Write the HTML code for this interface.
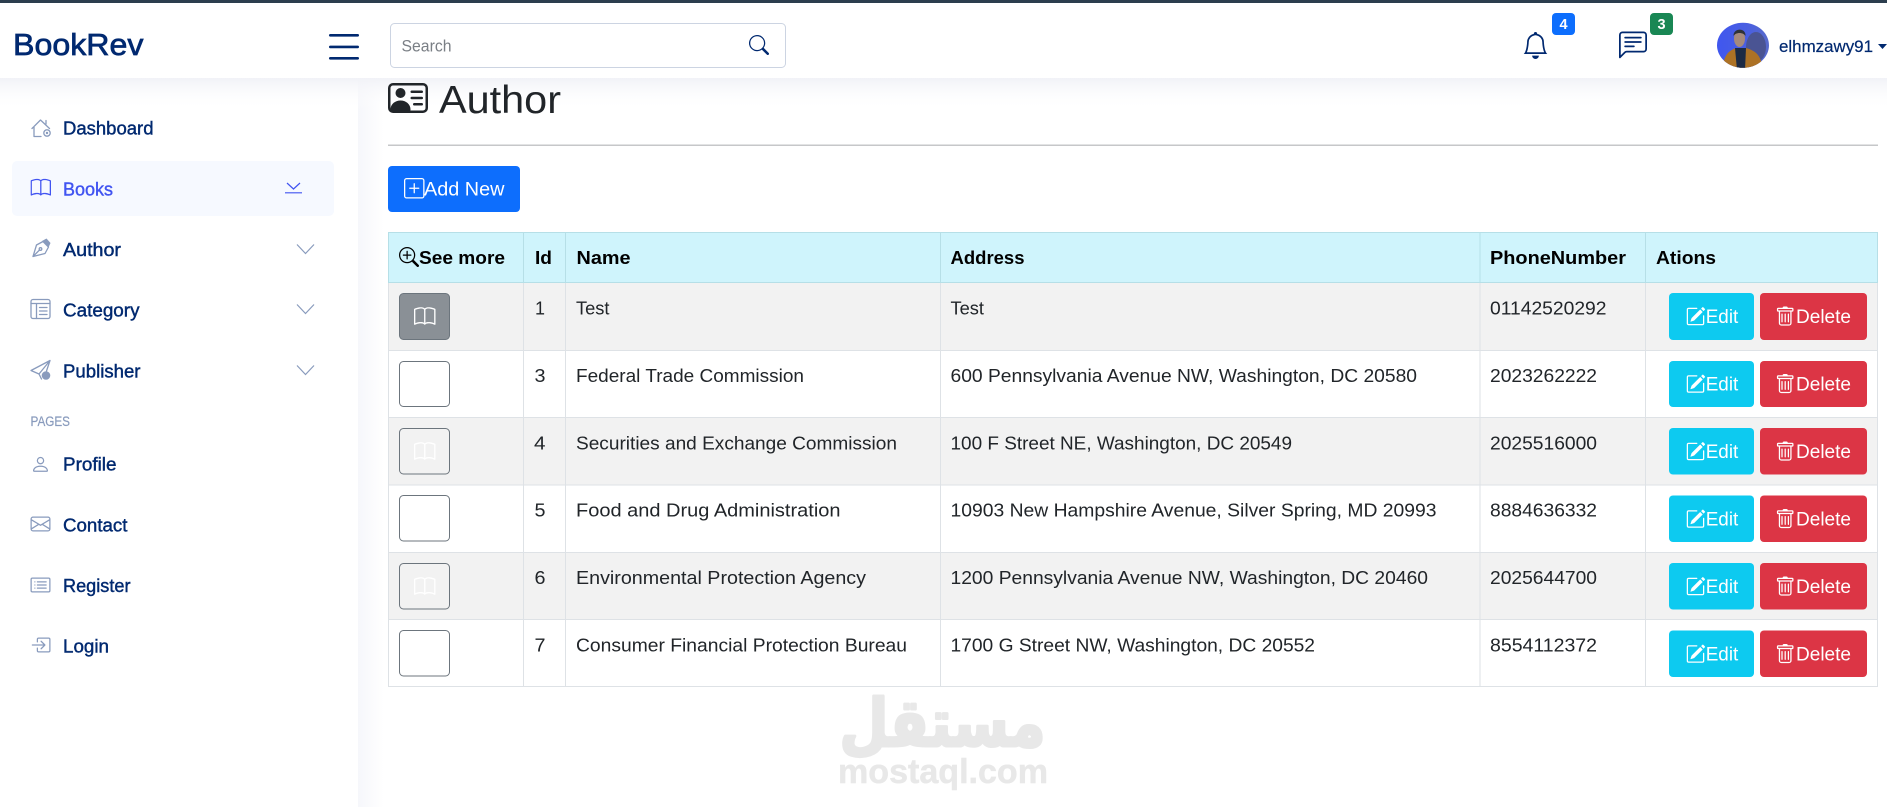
<!DOCTYPE html>
<html lang="en"><head><meta charset="utf-8"><title>BookRev - Author</title>
<style>
html,body{margin:0;padding:0;background:#fff;width:1887px;height:807px;overflow:hidden}
svg.page{display:block;position:absolute;left:0;top:0}
text{font-family:"Liberation Sans","DejaVu Sans",sans-serif}
.n{font-size:18px;fill:#012970;stroke:#012970;stroke-width:.4}
.th{font-size:18.5px;font-weight:700;fill:#000}
.td{font-size:18.5px;fill:#212529}
.b{font-size:19px;fill:#fff}
.ic{fill:#899bbd}
.st{fill:none;stroke:#899bbd;stroke-width:1.3;stroke-linejoin:round;stroke-linecap:round}
.bd{font-size:14.5px;font-weight:700;fill:#fff;text-anchor:middle}
</style></head><body>
<svg class="page" xmlns="http://www.w3.org/2000/svg" width="1887" height="807" viewBox="0 0 1887 807">
<defs>
<linearGradient id="sh" x1="0" y1="0" x2="0" y2="1"><stop offset="0" stop-color="#f1f2f7"/><stop offset="1" stop-color="#fff" stop-opacity="0"/></linearGradient>
<linearGradient id="sv" x1="0" y1="0" x2="1" y2="0"><stop offset="0" stop-color="#f6f7fb"/><stop offset="1" stop-color="#fff"/></linearGradient>
<linearGradient id="av" x1="0" y1="0" x2="1" y2="0"><stop offset="0" stop-color="#3f56f0"/><stop offset=".6" stop-color="#4a5fe0"/><stop offset="1" stop-color="#5a6cc8"/></linearGradient>
<clipPath id="avc"><ellipse cx="1743" cy="45.3" rx="26" ry="22.5"/></clipPath>
<symbol id="book" viewBox="0 0 16 16"><path d="M1 2.828c.885-.37 2.154-.769 3.388-.893 1.33-.134 2.458.063 3.112.752v9.746c-.935-.53-2.12-.603-3.213-.493-1.18.12-2.37.461-3.287.811V2.828zm7.5-.141c.654-.689 1.782-.886 3.112-.752 1.234.124 2.503.523 3.388.893v9.923c-.918-.35-2.107-.692-3.287-.81-1.094-.111-2.278-.039-3.213.492V2.687zM8 1.783C7.015.936 5.587.81 4.287.94c-1.514.153-3.042.672-3.994 1.105A.5.5 0 0 0 0 2.5v11a.5.5 0 0 0 .707.455c.882-.4 2.303-.881 3.68-1.02 1.409-.142 2.59.087 3.223.877a.5.5 0 0 0 .78 0c.633-.79 1.814-1.019 3.222-.877 1.378.139 2.8.62 3.681 1.02A.5.5 0 0 0 16 13.5v-11a.5.5 0 0 0-.293-.455c-.952-.433-2.48-.952-3.994-1.105C10.413.809 8.985.936 8 1.783z"/></symbol>
<symbol id="edit" viewBox="0 0 16 16"><path d="M15.502 1.94a.5.5 0 0 1 0 .706L14.459 3.69l-2-2L13.502.646a.5.5 0 0 1 .707 0l1.293 1.293zm-1.75 2.456-2-2L4.939 9.21a.5.5 0 0 0-.121.196l-.805 2.414a.25.25 0 0 0 .316.316l2.414-.805a.5.5 0 0 0 .196-.12l6.813-6.814z"/><path d="M1 13.5A1.5 1.5 0 0 0 2.5 15h11a1.5 1.5 0 0 0 1.5-1.5v-6a.5.5 0 0 0-1 0v6a.5.5 0 0 1-.5.5h-11a.5.5 0 0 1-.5-.5v-11a.5.5 0 0 1 .5-.5H9a.5.5 0 0 0 0-1H2.5A1.5 1.5 0 0 0 1 2.5v11z"/></symbol>
<symbol id="trash" viewBox="0 0 16 16"><path d="M5.5 5.5A.5.5 0 0 1 6 6v6a.5.5 0 0 1-1 0V6a.5.5 0 0 1 .5-.5zm2.5 0a.5.5 0 0 1 .5.5v6a.5.5 0 0 1-1 0V6a.5.5 0 0 1 .5-.5zm3 .5a.5.5 0 0 0-1 0v6a.5.5 0 0 0 1 0V6z"/><path fill-rule="evenodd" d="M14.5 3a1 1 0 0 1-1 1H13v9a2 2 0 0 1-2 2H5a2 2 0 0 1-2-2V4h-.5a1 1 0 0 1-1-1V2a1 1 0 0 1 1-1H6a1 1 0 0 1 1-1h2a1 1 0 0 1 1 1h3.5a1 1 0 0 1 1 1v1zM4.118 4 4 4.059V13a1 1 0 0 0 1 1h6a1 1 0 0 0 1-1V4.059L11.882 4H4.118zM2.5 3V2h11v1h-11z"/></symbol>
</defs>

<!-- main background, shadows -->
<rect width="1887" height="807" fill="#fff"/>
<rect x="358" y="78" width="26" height="729" fill="url(#sv)"/>
<rect x="0" y="78" width="358" height="729" fill="#fff"/>
<rect x="0" y="78" width="1887" height="32" fill="url(#sh)"/>

<!-- header -->
<rect x="0" y="0" width="1887" height="78" fill="#fff"/>
<rect x="0" y="0" width="1887" height="3" fill="#2c3e4e"/>
<text x="13" y="55" font-size="31" fill="#012970" stroke="#012970" stroke-width=".7" textLength="130.5" lengthAdjust="spacingAndGlyphs">BookRev</text>
<g fill="#012970"><rect x="329" y="34" width="30" height="2.6" rx="1.3"/><rect x="329" y="45.6" width="30" height="2.6" rx="1.3"/><rect x="329" y="57" width="30" height="2.6" rx="1.3"/></g>
<rect x="390.5" y="23.5" width="395" height="44" rx="4" fill="#fff" stroke="#ccd4e2"/>
<text x="401.5" y="51.5" font-size="17" fill="#7a7f85" textLength="50" lengthAdjust="spacingAndGlyphs">Search</text>
<svg x="749" y="35" width="20" height="20" viewBox="0 0 16 16" fill="#012970"><path d="M11.742 10.344a6.5 6.5 0 1 0-1.397 1.398h-.001c.03.04.062.078.098.115l3.85 3.85a1 1 0 0 0 1.415-1.414l-3.85-3.85a1.007 1.007 0 0 0-.115-.1zM12 6.5a5.5 5.5 0 1 1-11 0 5.5 5.5 0 0 1 11 0z"/></svg>

<svg x="1522" y="32" width="27" height="27" viewBox="0 0 16 16" fill="#012970"><path d="M8 16a2 2 0 0 0 2-2H6a2 2 0 0 0 2 2zM8 1.918l-.797.161A4.002 4.002 0 0 0 4 6c0 .628-.134 2.197-.459 3.742-.16.767-.376 1.566-.663 2.258h10.244c-.287-.692-.502-1.49-.663-2.258C12.134 8.197 12 6.628 12 6a4.002 4.002 0 0 0-3.203-3.92L8 1.917zM14.22 12c.223.447.481.801.78 1H1c.299-.199.557-.553.78-1C2.68 10.2 3 6.88 3 6c0-2.42 1.72-4.44 4.005-4.901a1 1 0 1 1 1.99 0A5.002 5.002 0 0 1 13 6c0 .88.32 4.2 1.22 6z"/></svg>
<rect x="1552" y="13" width="23" height="22" rx="4" fill="#0d6efd"/><text class="bd" x="1563.5" y="29">4</text>
<svg x="1619" y="31.5" width="28" height="28" viewBox="0 0 16 16" fill="#012970"><path d="M14 1a1 1 0 0 1 1 1v8a1 1 0 0 1-1 1H4.414A2 2 0 0 0 3 11.586l-2 2V2a1 1 0 0 1 1-1h12zM2 0a2 2 0 0 0-2 2v12.793a.5.5 0 0 0 .854.353l2.853-2.853A1 1 0 0 1 4.414 12H14a2 2 0 0 0 2-2V2a2 2 0 0 0-2-2H2z"/><path d="M3 3.5a.5.5 0 0 1 .5-.5h9a.5.5 0 0 1 0 1h-9a.5.5 0 0 1-.5-.5zM3 6a.5.5 0 0 1 .5-.5h9a.5.5 0 0 1 0 1h-9A.5.5 0 0 1 3 6zm0 2.5a.5.5 0 0 1 .5-.5h5a.5.5 0 0 1 0 1h-5a.5.5 0 0 1-.5-.5z"/></svg>
<rect x="1650" y="13" width="23" height="22" rx="4" fill="#198754"/><text class="bd" x="1661.5" y="29">3</text>

<!-- avatar -->
<g clip-path="url(#avc)">
<rect x="1715" y="20" width="56" height="50" fill="url(#av)"/>
<ellipse cx="1756" cy="47" rx="10" ry="15" fill="#4a5493"/>
<path d="M1722 70 C1724 55 1728 51 1736 48 L1746 48 C1756 51 1761 55 1763 70 Z" fill="#ad7225"/>
<path d="M1735 48 L1746 48 L1745 70 L1737 70 Z" fill="#1c2a44"/>
<ellipse cx="1739.5" cy="38.5" rx="5.5" ry="8.5" fill="#a68a7c"/>
<path d="M1733.5 36 C1733 28 1746 27 1745.5 36 C1743 32 1736 32 1733.5 36Z" fill="#2e3238"/>
</g>
<text x="1779" y="52" font-size="17" fill="#012970" stroke="#012970" stroke-width=".2" textLength="94" lengthAdjust="spacingAndGlyphs">elhmzawy91</text>
<path d="M1878 44 L1887 44 L1882.5 49 Z" fill="#012970"/>

<!-- sidebar -->
<rect x="12" y="161" width="322" height="55" rx="5" fill="#f6f9ff"/>
<text class="n" x="63" y="134.5" textLength="90.5" lengthAdjust="spacingAndGlyphs">Dashboard</text>
<text class="n" x="63" y="195.5" style="fill:#4154f1;stroke:#4154f1" textLength="50" lengthAdjust="spacingAndGlyphs">Books</text>
<text class="n" x="63" y="256" textLength="58" lengthAdjust="spacingAndGlyphs">Author</text>
<text class="n" x="63" y="316.5" textLength="76.5" lengthAdjust="spacingAndGlyphs">Category</text>
<text class="n" x="63" y="377.5" textLength="77.5" lengthAdjust="spacingAndGlyphs">Publisher</text>
<text x="30.5" y="426" font-size="13.5" fill="#899bbd" stroke="#899bbd" stroke-width=".2" textLength="39.5" lengthAdjust="spacingAndGlyphs">PAGES</text>
<text class="n" x="63" y="470.5" textLength="53.5" lengthAdjust="spacingAndGlyphs">Profile</text>
<text class="n" x="63" y="531.5" textLength="64.5" lengthAdjust="spacingAndGlyphs">Contact</text>
<text class="n" x="63" y="592" textLength="67.5" lengthAdjust="spacingAndGlyphs">Register</text>
<text class="n" x="63" y="652.5" textLength="46" lengthAdjust="spacingAndGlyphs">Login</text>

<!-- sidebar icons -->
<g class="st"><path d="M32 128.5 L40.5 120 L49.5 128.5 M34 126.5 V136.5 H41 M46 120.5 V124"/><circle cx="47" cy="133" r="3.2"/></g><circle cx="47" cy="133" r="1.2" class="ic"/>
<use href="#book" x="30.6" y="177.7" width="20.4" height="20.4" fill="#4154f1"/>
<g class="st"><path d="M33 256.5 L36.5 245 L43 241.5 L48.5 247 L45 253.5 Z M33 256.5 L39.5 250"/><circle cx="40.5" cy="249" r="1.3"/></g><path d="M42 241 L46.5 238.5 L50.5 243 L48.5 247.5 Z" class="ic"/>
<g class="st"><rect x="31" y="299.5" width="19" height="19" rx="2"/><path d="M31 303.5 H50 M36.5 303.5 V318.5 M39.5 307.5 H47 M39.5 311 H47 M39.5 314.5 H47"/></g>
<g class="st"><path d="M50 360.5 L31 370.5 L39 374 L41.5 379 M50 360.5 L39 374 M50 360.5 L46.5 371"/></g><circle cx="46" cy="375.5" r="4.3" class="ic"/>
<svg x="30.5" y="456" width="20" height="20" viewBox="0 0 16 16" class="ic" overflow="visible"><path d="M8 8a3 3 0 1 0 0-6 3 3 0 0 0 0 6zm2-3a2 2 0 1 1-4 0 2 2 0 0 1 4 0zm4 8c0 1-1 1-1 1H3s-1 0-1-1 1-4 6-4 6 3 6 4zm-1-.004c-.001-.246-.154-.986-.832-1.664C11.516 10.68 10.289 10 8 10c-2.29 0-3.516.68-4.168 1.332-.678.678-.83 1.418-.832 1.664h10z" transform="translate(0,-1.3)"/></svg>
<svg x="30.5" y="514" width="20" height="20" viewBox="0 0 16 16" class="ic"><path d="M0 4a2 2 0 0 1 2-2h12a2 2 0 0 1 2 2v8a2 2 0 0 1-2 2H2a2 2 0 0 1-2-2V4Zm2-1a1 1 0 0 0-1 1v.217l7 4.2 7-4.2V4a1 1 0 0 0-1-1H2Zm13 2.383-4.708 2.825L15 11.105V5.383Zm-.034 6.876-5.64-3.471L8 9.583l-1.326-.795-5.64 3.47A1 1 0 0 0 2 13h12a1 1 0 0 0 .966-.741ZM1 11.105l4.708-2.897L1 5.383v5.722Z"/></svg>
<svg x="30.5" y="575" width="20" height="20" viewBox="0 0 16 16" class="ic"><path d="M14.5 3a.5.5 0 0 1 .5.5v9a.5.5 0 0 1-.5.5h-13a.5.5 0 0 1-.5-.5v-9a.5.5 0 0 1 .5-.5h13zm-13-1A1.5 1.5 0 0 0 0 3.5v9A1.5 1.5 0 0 0 1.5 14h13a1.5 1.5 0 0 0 1.5-1.5v-9A1.5 1.5 0 0 0 14.5 2h-13z"/><path d="M5 8a.5.5 0 0 1 .5-.5h7a.5.5 0 0 1 0 1h-7A.5.5 0 0 1 5 8zm0-2.5a.5.5 0 0 1 .5-.5h7a.5.5 0 0 1 0 1h-7a.5.5 0 0 1-.5-.5zm0 5a.5.5 0 0 1 .5-.5h7a.5.5 0 0 1 0 1h-7a.5.5 0 0 1-.5-.5zm-1-5a.5.5 0 1 1-1 0 .5.5 0 0 1 1 0zM4 8a.5.5 0 1 1-1 0 .5.5 0 0 1 1 0zm0 2.5a.5.5 0 1 1-1 0 .5.5 0 0 1 1 0z"/></svg>
<svg x="30.5" y="635" width="20" height="20" viewBox="0 0 16 16" class="ic"><path d="M6 3.5a.5.5 0 0 1 .5-.5h8a.5.5 0 0 1 .5.5v9a.5.5 0 0 1-.5.5h-8a.5.5 0 0 1-.5-.5v-2a.5.5 0 0 0-1 0v2A1.5 1.5 0 0 0 6.5 14h8a1.5 1.5 0 0 0 1.5-1.5v-9A1.5 1.5 0 0 0 14.5 2h-8A1.5 1.5 0 0 0 5 3.5v2a.5.5 0 0 0 1 0v-2z"/><path d="M11.854 8.354a.5.5 0 0 0 0-.708l-3-3a.5.5 0 1 0-.708.708L10.293 7.5H1.5a.5.5 0 0 0 0 1h8.793l-2.147 2.146a.5.5 0 0 0 .708.708l3-3z"/></svg>

<!-- chevrons -->
<g fill="none" stroke="#899bbd" stroke-width="1.2"><path d="M297 244.5 L305.5 253.5 L314 244.5"/><path d="M297 304.5 L305.5 313.5 L314 304.5"/><path d="M297 365.5 L305.5 374.5 L314 365.5"/></g>
<path d="M287 183 L293.5 189 L300 183 M285 192.8 H302" fill="none" stroke="#4154f1" stroke-width="1.2"/>

<!-- title -->
<svg x="388" y="78" width="40" height="40" viewBox="0 0 16 16" fill="#212529"><path d="M5 8a2 2 0 1 0 0-4 2 2 0 0 0 0 4Zm4-2.5a.5.5 0 0 1 .5-.5h4a.5.5 0 0 1 0 1h-4a.5.5 0 0 1-.5-.5ZM9 8a.5.5 0 0 1 .5-.5h4a.5.5 0 0 1 0 1h-4A.5.5 0 0 1 9 8Zm1 2.5a.5.5 0 0 1 .5-.5h3a.5.5 0 0 1 0 1h-3a.5.5 0 0 1-.5-.5Z"/><path d="M2 2a2 2 0 0 0-2 2v8a2 2 0 0 0 2 2h12a2 2 0 0 0 2-2V4a2 2 0 0 0-2-2H2ZM1 4a1 1 0 0 1 1-1h12a1 1 0 0 1 1 1v8a1 1 0 0 1-1 1H8.96c.026-.163.04-.33.04-.5C9 10.567 7.21 9 5 9c-2.086 0-3.8 1.398-3.984 3.181A1.006 1.006 0 0 1 1 12V4Z"/></svg>
<text x="439" y="113" font-size="39" fill="#212529" textLength="122" lengthAdjust="spacingAndGlyphs">Author</text>
<rect x="388" y="144.5" width="1490" height="1.5" fill="#c6c7c9"/>

<!-- add new -->
<rect x="388" y="166" width="132" height="46" rx="4" fill="#0d6efd"/>
<svg x="404" y="178" width="20.5" height="20.5" viewBox="0 0 16 16" fill="#fff"><path d="M14 1a1 1 0 0 1 1 1v12a1 1 0 0 1-1 1H2a1 1 0 0 1-1-1V2a1 1 0 0 1 1-1h12zM2 0a2 2 0 0 0-2 2v12a2 2 0 0 0 2 2h12a2 2 0 0 0 2-2V2a2 2 0 0 0-2-2H2z"/><path d="M8 4a.5.5 0 0 1 .5.5v3h3a.5.5 0 0 1 0 1h-3v3a.5.5 0 0 1-1 0v-3h-3a.5.5 0 0 1 0-1h3v-3A.5.5 0 0 1 8 4z"/></svg>
<text class="b" x="424" y="195.5" textLength="80.5" lengthAdjust="spacingAndGlyphs">Add New</text>

<!-- table backgrounds -->
<rect x="388" y="232" width="1490" height="50.5" fill="#cff4fc"/>
<rect x="388" y="283" width="1490" height="67" fill="#f2f2f2"/>
<rect x="388" y="418" width="1490" height="67" fill="#f2f2f2"/>
<rect x="388" y="553" width="1490" height="67" fill="#f2f2f2"/>
<g fill="#dee2e6">
<rect x="388" y="350" width="1490" height="1"/><rect x="388" y="417" width="1490" height="1"/><rect x="388" y="484.5" width="1490" height="1"/><rect x="388" y="552" width="1490" height="1"/><rect x="388" y="619" width="1490" height="1"/><rect x="388" y="686" width="1490" height="1"/>
<rect x="388" y="282" width="1" height="405"/><rect x="523" y="282" width="1" height="405"/><rect x="565" y="282" width="1" height="405"/><rect x="940" y="282" width="1" height="405"/><rect x="1479.5" y="282" width="1" height="405"/><rect x="1645" y="282" width="1" height="405"/><rect x="1877" y="282" width="1" height="405"/>
</g>
<g fill="#b6dfe7">
<rect x="388" y="232" width="1490" height="1"/><rect x="388" y="282" width="1490" height="1"/>
<rect x="388" y="232" width="1" height="51"/><rect x="523" y="232" width="1" height="51"/><rect x="565" y="232" width="1" height="51"/><rect x="940" y="232" width="1" height="51"/><rect x="1479.5" y="232" width="1" height="51"/><rect x="1645" y="232" width="1" height="51"/><rect x="1877" y="232" width="1" height="51"/>
</g>

<!-- table head -->
<svg x="399" y="247" width="20" height="20" viewBox="0 0 16 16" fill="#000"><path d="M6.5 12a5.5 5.5 0 1 0 0-11 5.5 5.5 0 0 0 0 11zM13 6.5a6.5 6.5 0 1 1-13 0 6.5 6.5 0 0 1 13 0z"/><path d="M10.344 11.742c.03.04.062.078.098.115l3.85 3.85a1 1 0 0 0 1.415-1.414l-3.85-3.85a1.007 1.007 0 0 0-.115-.1 6.538 6.538 0 0 1-1.398 1.4z"/><path d="M6.5 3a.5.5 0 0 1 .5.5V6h2.5a.5.5 0 0 1 0 1H7v2.5a.5.5 0 0 1-1 0V7H3.5a.5.5 0 0 1 0-1H6V3.5a.5.5 0 0 1 .5-.5z"/></svg>
<text class="th" x="419" y="264" textLength="86" lengthAdjust="spacingAndGlyphs">See more</text>
<text class="th" x="535" y="264" textLength="17" lengthAdjust="spacingAndGlyphs">Id</text>
<text class="th" x="576.5" y="264" textLength="54" lengthAdjust="spacingAndGlyphs">Name</text>
<text class="th" x="950.5" y="264" textLength="74" lengthAdjust="spacingAndGlyphs">Address</text>
<text class="th" x="1490" y="264" textLength="136" lengthAdjust="spacingAndGlyphs">PhoneNumber</text>
<text class="th" x="1656" y="264" textLength="60" lengthAdjust="spacingAndGlyphs">Ations</text>

<!-- row 1 -->
<rect x="399.5" y="293.5" width="50" height="46" rx="4" fill="#8a9096" stroke="#6c757d"/>
<use href="#book" x="414" y="306" width="21.5" height="21.5" fill="#fff"/>
<text class="td" x="535" y="314.5" textLength="10" lengthAdjust="spacingAndGlyphs">1</text>
<text class="td" x="576" y="314.5" textLength="33.5" lengthAdjust="spacingAndGlyphs">Test</text>
<text class="td" x="950.5" y="314.5" textLength="33.5" lengthAdjust="spacingAndGlyphs">Test</text>
<text class="td" x="1490" y="314.5" textLength="116.5" lengthAdjust="spacingAndGlyphs">01142520292</text>
<!-- row 2 -->
<rect x="399.5" y="361.5" width="50" height="45" rx="4" fill="#fff" stroke="#6c757d"/>
<text class="td" x="534.5" y="382" textLength="11" lengthAdjust="spacingAndGlyphs">3</text>
<text class="td" x="576" y="382" textLength="228" lengthAdjust="spacingAndGlyphs">Federal Trade Commission</text>
<text class="td" x="950.5" y="382" textLength="466.5" lengthAdjust="spacingAndGlyphs">600 Pennsylvania Avenue NW, Washington, DC 20580</text>
<text class="td" x="1490" y="382" textLength="107" lengthAdjust="spacingAndGlyphs">2023262222</text>
<!-- row 3 -->
<rect x="399.5" y="428.5" width="50" height="45.5" rx="4" fill="#f2f2f2" stroke="#6c757d"/>
<use href="#book" x="414" y="441" width="21.5" height="21.5" fill="#fff"/>
<text class="td" x="534" y="449.5" textLength="11.5" lengthAdjust="spacingAndGlyphs">4</text>
<text class="td" x="576" y="449.5" textLength="321" lengthAdjust="spacingAndGlyphs">Securities and Exchange Commission</text>
<text class="td" x="950.5" y="449.5" textLength="341.5" lengthAdjust="spacingAndGlyphs">100 F Street NE, Washington, DC 20549</text>
<text class="td" x="1490" y="449.5" textLength="107" lengthAdjust="spacingAndGlyphs">2025516000</text>
<!-- row 4 -->
<rect x="399.5" y="495.5" width="50" height="45.5" rx="4" fill="#fff" stroke="#6c757d"/>
<text class="td" x="534.5" y="516.5" textLength="11" lengthAdjust="spacingAndGlyphs">5</text>
<text class="td" x="576" y="516.5" textLength="264.5" lengthAdjust="spacingAndGlyphs">Food and Drug Administration</text>
<text class="td" x="950.5" y="516.5" textLength="486" lengthAdjust="spacingAndGlyphs">10903 New Hampshire Avenue, Silver Spring, MD 20993</text>
<text class="td" x="1490" y="516.5" textLength="107" lengthAdjust="spacingAndGlyphs">8884636332</text>
<!-- row 5 -->
<rect x="399.5" y="563.5" width="50" height="45.5" rx="4" fill="#f2f2f2" stroke="#6c757d"/>
<use href="#book" x="414" y="576" width="21.5" height="21.5" fill="#fff"/>
<text class="td" x="534.5" y="584" textLength="11" lengthAdjust="spacingAndGlyphs">6</text>
<text class="td" x="576" y="584" textLength="290" lengthAdjust="spacingAndGlyphs">Environmental Protection Agency</text>
<text class="td" x="950.5" y="584" textLength="477.5" lengthAdjust="spacingAndGlyphs">1200 Pennsylvania Avenue NW, Washington, DC 20460</text>
<text class="td" x="1490" y="584" textLength="107" lengthAdjust="spacingAndGlyphs">2025644700</text>
<!-- row 6 -->
<rect x="399.5" y="630.5" width="50" height="45.5" rx="4" fill="#fff" stroke="#6c757d"/>
<text class="td" x="534.5" y="651.5" textLength="11" lengthAdjust="spacingAndGlyphs">7</text>
<text class="td" x="576" y="651.5" textLength="331" lengthAdjust="spacingAndGlyphs">Consumer Financial Protection Bureau</text>
<text class="td" x="950.5" y="651.5" textLength="364.5" lengthAdjust="spacingAndGlyphs">1700 G Street NW, Washington, DC 20552</text>
<text class="td" x="1490" y="651.5" textLength="107" lengthAdjust="spacingAndGlyphs">8554112372</text>

<!-- action buttons -->
<g fill="#0dcaf0">
<rect x="1669" y="293" width="85" height="47" rx="4"/><rect x="1669" y="361" width="85" height="46" rx="4"/><rect x="1669" y="428" width="85" height="46.5" rx="4"/><rect x="1669" y="495.5" width="85" height="46.5" rx="4"/><rect x="1669" y="563" width="85" height="46.5" rx="4"/><rect x="1669" y="630.5" width="85" height="46.5" rx="4"/>
</g>
<g fill="#dc3545">
<rect x="1760" y="293" width="107" height="47" rx="4"/><rect x="1760" y="361" width="107" height="46" rx="4"/><rect x="1760" y="428" width="107" height="46.5" rx="4"/><rect x="1760" y="495.5" width="107" height="46.5" rx="4"/><rect x="1760" y="563" width="107" height="46.5" rx="4"/><rect x="1760" y="630.5" width="107" height="46.5" rx="4"/>
</g>
<g fill="#fff">
<use href="#edit" x="1685.5" y="306.5" width="20" height="20"/><use href="#edit" x="1685.5" y="374" width="20" height="20"/><use href="#edit" x="1685.5" y="441.5" width="20" height="20"/><use href="#edit" x="1685.5" y="509" width="20" height="20"/><use href="#edit" x="1685.5" y="576.5" width="20" height="20"/><use href="#edit" x="1685.5" y="644" width="20" height="20"/>
<use href="#trash" x="1775" y="306.5" width="20.4" height="20.4"/><use href="#trash" x="1775" y="374" width="20.4" height="20.4"/><use href="#trash" x="1775" y="441.5" width="20.4" height="20.4"/><use href="#trash" x="1775" y="509" width="20.4" height="20.4"/><use href="#trash" x="1775" y="576.5" width="20.4" height="20.4"/><use href="#trash" x="1775" y="644" width="20.4" height="20.4"/>
</g>
<text class="b" x="1705.7" y="323" textLength="32.6" lengthAdjust="spacingAndGlyphs">Edit</text><text class="b" x="1796" y="323" textLength="55" lengthAdjust="spacingAndGlyphs">Delete</text>
<text class="b" x="1705.7" y="390.5" textLength="32.6" lengthAdjust="spacingAndGlyphs">Edit</text><text class="b" x="1796" y="390.5" textLength="55" lengthAdjust="spacingAndGlyphs">Delete</text>
<text class="b" x="1705.7" y="458" textLength="32.6" lengthAdjust="spacingAndGlyphs">Edit</text><text class="b" x="1796" y="458" textLength="55" lengthAdjust="spacingAndGlyphs">Delete</text>
<text class="b" x="1705.7" y="525.5" textLength="32.6" lengthAdjust="spacingAndGlyphs">Edit</text><text class="b" x="1796" y="525.5" textLength="55" lengthAdjust="spacingAndGlyphs">Delete</text>
<text class="b" x="1705.7" y="593" textLength="32.6" lengthAdjust="spacingAndGlyphs">Edit</text><text class="b" x="1796" y="593" textLength="55" lengthAdjust="spacingAndGlyphs">Delete</text>
<text class="b" x="1705.7" y="660.5" textLength="32.6" lengthAdjust="spacingAndGlyphs">Edit</text><text class="b" x="1796" y="660.5" textLength="55" lengthAdjust="spacingAndGlyphs">Delete</text>

<!-- watermark -->
<text x="942.5" y="746" direction="rtl" text-anchor="middle" font-size="66" font-weight="700" fill="#e8e8e8" stroke="#e8e8e8" stroke-width="3" stroke-linejoin="round" style="font-family:'DejaVu Sans',sans-serif" textLength="206" lengthAdjust="spacingAndGlyphs">مستقل</text>
<text x="838" y="783" font-size="34" font-weight="700" fill="#e8e8e8" stroke="#e8e8e8" stroke-width=".5" textLength="210" lengthAdjust="spacingAndGlyphs">mostaql.com</text>
</svg>
</body></html>
